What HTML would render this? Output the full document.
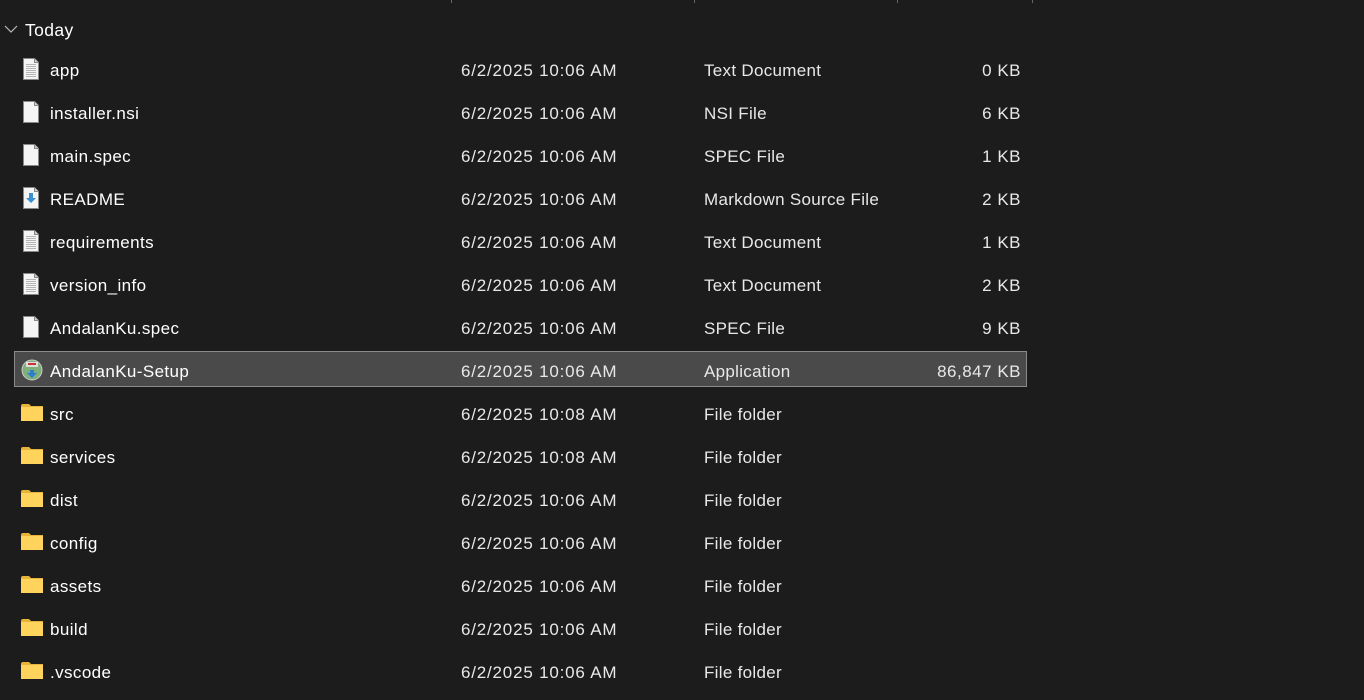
<!DOCTYPE html>
<html><head><meta charset="utf-8"><style>
body{margin:0;width:1364px;height:700px;background:#1c1c1c;overflow:hidden;font-family:"Segoe UI","Liberation Sans",sans-serif;font-size:17px;letter-spacing:0.4px;color:#fff;position:relative}
.tick{position:absolute;top:0;width:1px;height:3px;background:#666}
.row{position:absolute;left:0;width:1364px;height:36px}
.row span{position:absolute;top:9px;line-height:20px;white-space:nowrap}
.n{left:50px}.d{left:461px;color:#e8e8e8;letter-spacing:0.8px}.t{left:704px;color:#e8e8e8;letter-spacing:0.3px}.s{right:343px;color:#e8e8e8;letter-spacing:0.5px}
.sel{position:absolute;left:14px;top:351px;width:1011px;height:34px;background:#4a4a4a;border:1px solid #8a8a8a}
.ic{position:absolute}
</style></head><body>
<div class="tick" style="left:451px"></div><div class="tick" style="left:694px"></div><div class="tick" style="left:897px"></div><div class="tick" style="left:1032px"></div>
<svg style="position:absolute;left:4px;top:24px" width="14" height="10"><path d="M1 2 L7 8 L13 2" stroke="#bbb" fill="none" stroke-width="1.2"/></svg>
<div style="position:absolute;left:25px;top:20px;line-height:20px;font-size:17.5px">Today</div>
<div class="sel"></div>
<svg width="0" height="0" style="position:absolute"><defs>
<g id="doc"><path d="M0.5 0.5H11.5L15.5 4.5V21.5H0.5Z" fill="#f4f4f4" stroke="#888"/><path d="M11.5 0.5V4.5H15.5" fill="#ccc" stroke="#888"/></g>
<g id="lines"><path d="M3 6.5h10M3 8.5h10M3 10.5h10M3 12.5h10M3 14.5h10M3 16.5h10M3 18.5h10" stroke="#a0a0a0" stroke-width="0.8"/></g>
<g id="fold"><path d="M0 2 Q0 0 2 0 H8 L10 2 H22 V17 H0Z" fill="#e8b339"/><rect x="0" y="3" width="22" height="14" fill="#ffd35c"/></g>
</defs></svg>
<div class="row" style="top:52px"><svg class="ic" style="left:23px;top:6px" width="16" height="22"><use href="#doc"/><use href="#lines"/></svg><span class="n">app</span><span class="d">6/2/2025 10:06 AM</span><span class="t">Text Document</span><span class="s">0 KB</span></div>
<div class="row" style="top:95px"><svg class="ic" style="left:23px;top:6px" width="16" height="22"><use href="#doc"/></svg><span class="n">installer.nsi</span><span class="d">6/2/2025 10:06 AM</span><span class="t">NSI File</span><span class="s">6 KB</span></div>
<div class="row" style="top:138px"><svg class="ic" style="left:23px;top:6px" width="16" height="22"><use href="#doc"/></svg><span class="n">main.spec</span><span class="d">6/2/2025 10:06 AM</span><span class="t">SPEC File</span><span class="s">1 KB</span></div>
<div class="row" style="top:181px"><svg class="ic" style="left:23px;top:6px" width="16" height="22"><use href="#doc"/><path d="M6 6h4v5h3l-5 5-5-5h3z" fill="#3a8fd0"/></svg><span class="n">README</span><span class="d">6/2/2025 10:06 AM</span><span class="t">Markdown Source File</span><span class="s">2 KB</span></div>
<div class="row" style="top:224px"><svg class="ic" style="left:23px;top:6px" width="16" height="22"><use href="#doc"/><use href="#lines"/></svg><span class="n">requirements</span><span class="d">6/2/2025 10:06 AM</span><span class="t">Text Document</span><span class="s">1 KB</span></div>
<div class="row" style="top:267px"><svg class="ic" style="left:23px;top:6px" width="16" height="22"><use href="#doc"/><use href="#lines"/></svg><span class="n">version_info</span><span class="d">6/2/2025 10:06 AM</span><span class="t">Text Document</span><span class="s">2 KB</span></div>
<div class="row" style="top:310px"><svg class="ic" style="left:23px;top:6px" width="16" height="22"><use href="#doc"/></svg><span class="n">AndalanKu.spec</span><span class="d">6/2/2025 10:06 AM</span><span class="t">SPEC File</span><span class="s">9 KB</span></div>
<div class="row" style="top:353px"><svg class="ic" style="left:21px;top:6px" width="22" height="22"><circle cx="11" cy="11" r="10" fill="#7fb07a" stroke="#ccc"/><rect x="5" y="3" width="12" height="5" fill="#ddd"/><rect x="7" y="4" width="8" height="2" fill="#c33"/><path d="M9 11h4v3h3l-5 5-5-5h3z" fill="#2a7fd0"/></svg><span class="n">AndalanKu-Setup</span><span class="d">6/2/2025 10:06 AM</span><span class="t">Application</span><span class="s">86,847 KB</span></div>
<div class="row" style="top:396px"><svg class="ic" style="left:21px;top:8px" width="22" height="17"><use href="#fold"/></svg><span class="n">src</span><span class="d">6/2/2025 10:08 AM</span><span class="t">File folder</span></div>
<div class="row" style="top:439px"><svg class="ic" style="left:21px;top:8px" width="22" height="17"><use href="#fold"/></svg><span class="n">services</span><span class="d">6/2/2025 10:08 AM</span><span class="t">File folder</span></div>
<div class="row" style="top:482px"><svg class="ic" style="left:21px;top:8px" width="22" height="17"><use href="#fold"/></svg><span class="n">dist</span><span class="d">6/2/2025 10:06 AM</span><span class="t">File folder</span></div>
<div class="row" style="top:525px"><svg class="ic" style="left:21px;top:8px" width="22" height="17"><use href="#fold"/></svg><span class="n">config</span><span class="d">6/2/2025 10:06 AM</span><span class="t">File folder</span></div>
<div class="row" style="top:568px"><svg class="ic" style="left:21px;top:8px" width="22" height="17"><use href="#fold"/></svg><span class="n">assets</span><span class="d">6/2/2025 10:06 AM</span><span class="t">File folder</span></div>
<div class="row" style="top:611px"><svg class="ic" style="left:21px;top:8px" width="22" height="17"><use href="#fold"/></svg><span class="n">build</span><span class="d">6/2/2025 10:06 AM</span><span class="t">File folder</span></div>
<div class="row" style="top:654px"><svg class="ic" style="left:21px;top:8px" width="22" height="17"><use href="#fold"/></svg><span class="n">.vscode</span><span class="d">6/2/2025 10:06 AM</span><span class="t">File folder</span></div>
</body></html>
